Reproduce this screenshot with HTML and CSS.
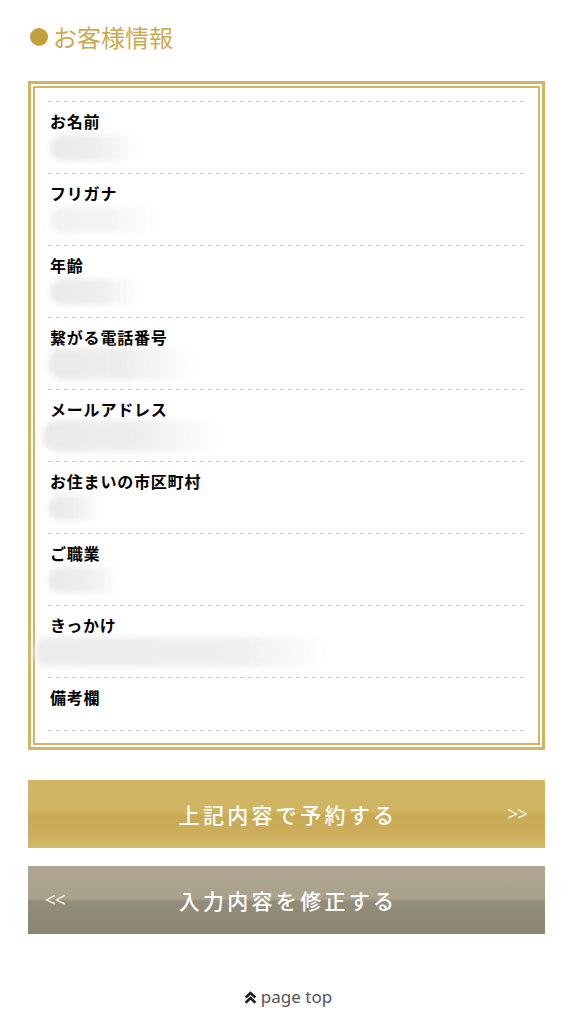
FILE: index.html
```html
<!DOCTYPE html>
<html lang="ja">
<head>
<meta charset="utf-8">
<title>お客様情報</title>
<link rel="stylesheet" href="styles.css">
</head>
<body>
<main class="page">
  <h2 class="heading"><span class="dot"></span>お客様情報</h2>
  <section class="frame">
    <div class="frame-inner">
      <dl class="list">
        <div class="row"><dt>お名前</dt><dd class="value"><span class="smudge" style="width:90px;margin-left:2px"></span></dd></div>
        <div class="row"><dt>フリガナ</dt><dd class="value"><span class="smudge faint" style="width:110px;margin-left:2px"></span></dd></div>
        <div class="row"><dt>年齢</dt><dd class="value"><span class="smudge" style="width:92px;margin-left:2px"></span></dd></div>
        <div class="row"><dt>繋がる電話番号</dt><dd class="value"><span class="smudge tall" style="width:150px;margin-left:0"></span></dd></div>
        <div class="row"><dt>メールアドレス</dt><dd class="value"><span class="smudge tall" style="width:180px;margin-left:-6px"></span></dd></div>
        <div class="row"><dt>お住まいの市区町村</dt><dd class="value"><span class="smudge" style="width:52px;margin-left:0"></span></dd></div>
        <div class="row"><dt>ご職業</dt><dd class="value"><span class="smudge" style="width:72px;margin-left:0"></span></dd></div>
        <div class="row"><dt>きっかけ</dt><dd class="value"><span class="smudge wide" style="width:295px;margin-left:-13px"></span></dd></div>
        <div class="row last"><dt>備考欄</dt><dd class="value empty"></dd></div>
      </dl>
    </div>
  </section>
  <div class="actions">
    <button class="btn btn-gold" type="button"><span class="btn-label">上記内容で予約する</span><span class="arrow arrow-right">&gt;&gt;</span></button>
    <button class="btn btn-gray" type="button"><span class="arrow arrow-left">&lt;&lt;</span><span class="btn-label">入力内容を修正する</span></button>
  </div>
  <a class="pagetop" href="#">
    <svg class="pagetop-icon" viewBox="0 0 12 12" width="13" height="13" aria-hidden="true">
      <polyline points="1.5,6 6,1.8 10.5,6" fill="none" stroke="#222" stroke-width="2.4" stroke-linejoin="miter"/>
      <polyline points="1.5,10.8 6,6.6 10.5,10.8" fill="none" stroke="#222" stroke-width="2.4" stroke-linejoin="miter"/>
    </svg>
    <span>page top</span>
  </a>
</main>
</body>
</html>
```

FILE: styles.css
```css
* { box-sizing: border-box; }

html, body {
  margin: 0;
  padding: 0;
  background: #ffffff;
}

body {
  font-family: "Noto Sans CJK JP", "Noto Sans", sans-serif;
  color: #111;
}

.page {
  padding: 22px 28px 20px;
}

.heading {
  display: flex;
  align-items: center;
  gap: 5px;
  margin: 0 0 29px 2px;
  height: 30px;
  font-size: 24px;
  font-weight: 400;
  line-height: 30px;
  color: #c8ab52;
}

.dot {
  display: inline-block;
  width: 18px;
  height: 18px;
  border-radius: 50%;
  background: #c2a03c;
}

.frame {
  border: 3px solid #ceb666;
  padding: 2px;
}

.frame-inner {
  border: 2px solid #ceb666;
  padding: 13px 14px 12px 13px;
}

.list {
  margin: 0;
  padding: 0;
}

.row {
  padding: 10px 0 9px;
  background-image: repeating-linear-gradient(to right, #c9c9c9 0 4.5px, transparent 4.5px 8px);
  background-size: 100% 1px;
  background-position: left top;
  background-repeat: no-repeat;
}

.row.last {
  background-image:
    repeating-linear-gradient(to right, #c9c9c9 0 4.5px, transparent 4.5px 8px),
    repeating-linear-gradient(to right, #c9c9c9 0 4.5px, transparent 4.5px 8px);
  background-size: 100% 1px, 100% 1px;
  background-position: left top, left bottom;
  background-repeat: no-repeat, no-repeat;
  padding-bottom: 10px;
}

.row dt {
  margin: 0 0 0 2px;
  font-size: 16px;
  font-weight: 700;
  line-height: 21px;
  letter-spacing: 0.8px;
  color: #000;
}

.value {
  margin: 0;
  height: 32px;
  display: flex;
  align-items: center;
}

.value.empty {
  height: 13px;
}

.smudge {
  display: block;
  height: 26px;
  border-radius: 13px;
  background: linear-gradient(to right, #e9e9e9 0%, #eeeeee 55%, rgba(245,245,245,0) 100%);
  filter: blur(3px);
}

.smudge.faint {
  background: linear-gradient(to right, #f1f1f1 0%, #f4f4f4 55%, rgba(248,248,248,0) 100%);
}

.smudge.tall {
  height: 32px;
  border-radius: 16px;
}

.smudge.wide {
  height: 30px;
  background: linear-gradient(to right, #ececec 0%, #efefef 70%, rgba(246,246,246,0) 100%);
}

.actions {
  display: flex;
  flex-direction: column;
  gap: 18px;
  margin-top: 30px;
}

.btn {
  position: relative;
  display: flex;
  align-items: center;
  justify-content: center;
  width: 100%;
  height: 68px;
  border: 0;
  padding: 0;
  font-family: "Noto Sans CJK JP", "Noto Sans", sans-serif;
  color: #ffffff;
  cursor: pointer;
}

.btn-label {
  font-size: 21px;
  font-weight: 500;
  letter-spacing: 3.3px;
  padding-left: 3px;
}

.btn-gold {
  background: linear-gradient(to bottom, #d0b765 0%, #cfb562 46%, #c9aa55 52%, #cbad5a 75%, #d2ba6b 100%);
}

.btn-gray {
  background: linear-gradient(to bottom, #aea690 0%, #a9a18b 48%, #928c7b 52%, #8e8877 80%, #8a8473 100%);
}

.arrow {
  position: absolute;
  top: 50%;
  transform: translateY(-50%);
  font-family: "Noto Sans", sans-serif;
  font-size: 19px;
  line-height: 1;
  letter-spacing: -1px;
  color: #f8f2de;
}

.arrow-right { right: 18px; }
.arrow-left { left: 17px; color: #f2f0ea; }

.pagetop {
  display: flex;
  align-items: center;
  justify-content: center;
  gap: 4px;
  margin-top: 52px;
  padding-left: 3px;
  text-decoration: none;
  color: #555;
  font-family: "Noto Sans", "Open Sans", sans-serif;
  font-size: 17px;
  line-height: 22px;
}

.pagetop-icon {
  display: block;
}
```
